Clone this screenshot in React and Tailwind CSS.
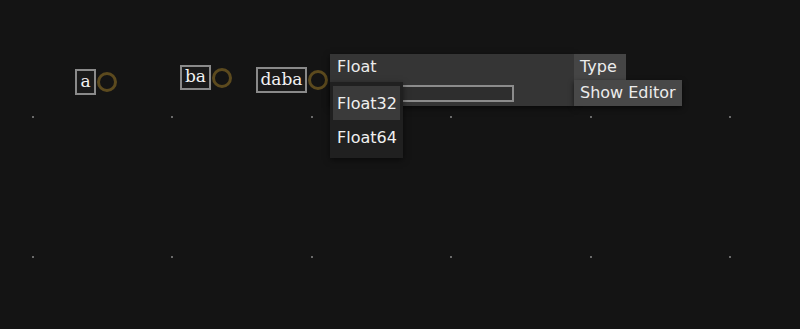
import React from "react";

const xs = [32, 171, 311, 450, 590, 729];
const ys = [116, 256];

const nodes = [
  { left: 75, top: 69, w: 21, h: 26, label: "a", dy: 3 },
  { left: 180, top: 65, w: 31, h: 25, label: "ba", dy: 3 },
  { left: 256, top: 67, w: 51, h: 26, label: "daba", dy: 3 },
];

function Node({ left, top, w, h, label, dy }) {
  return (
    <div className="absolute flex items-start gap-[1px]" style={{ left, top }}>
      <div
        className="border-2 border-[#8a8a8a] bg-[#1a1a1a] text-[#f2f2f2] flex items-center justify-center text-[17px] leading-none pb-[2px]"
        style={{ width: w, height: h, fontFamily: '"DejaVu Serif", serif' }}
      >
        {label}
      </div>
      <div className="mt-[3px] w-[20px] h-[20px] rounded-full border-[3px] border-[#5c4a1e]" />
    </div>
  );
}

export default function App() {
  return (
    <div
      className="relative w-[800px] h-[329px] bg-[#141414] overflow-hidden"
      style={{ fontFamily: '"DejaVu Sans", sans-serif' }}
    >
      {ys.map((y) =>
        xs.map((x) => (
          <div
            key={`${x}-${y}`}
            className="absolute w-[2px] h-[2px] bg-[#6a6a6a]"
            style={{ left: x, top: y }}
          />
        ))
      )}

      {nodes.map((n) => (
        <Node key={n.label} {...n} />
      ))}

      {/* panel window */}
      <div className="absolute left-[330px] top-[54px] flex items-start text-[16px] text-[#ececec]">
        <div className="w-[244px] h-[52px] bg-[#353535] shadow-[0_2px_6px_rgba(0,0,0,0.6)] flex flex-col">
          <div className="pl-[7px] pt-[2px] leading-[22px]">Float</div>
          <div className="ml-[70px] mt-[7px] w-[114px] h-[17px] border-2 border-[#8c8c8c] bg-[#2e2e2e]" />
        </div>
        <div className="flex flex-col items-start">
          <div className="w-[52px] h-[26px] bg-[#454545] leading-[25px] pl-[6px]">Type</div>
          <div className="w-[108px] h-[26px] bg-[#484848] leading-[25px] pl-[6px] shadow-[0_2px_5px_rgba(0,0,0,0.6)]">
            Show Editor
          </div>
        </div>
      </div>

      {/* dropdown menu overlay */}
      <div className="absolute left-[330px] top-[82px] w-[73px] h-[76px] bg-[#202020] shadow-[0_2px_6px_rgba(0,0,0,0.5)] flex flex-col pt-[4px] px-[3px] text-[16px] text-[#f0f0f0]">
        <div className="h-[34px] bg-[#3a3a3a] leading-[35px] pl-[4px]">Float32</div>
        <div className="h-[34px] leading-[35px] pl-[4px]">Float64</div>
      </div>
    </div>
  );
}
